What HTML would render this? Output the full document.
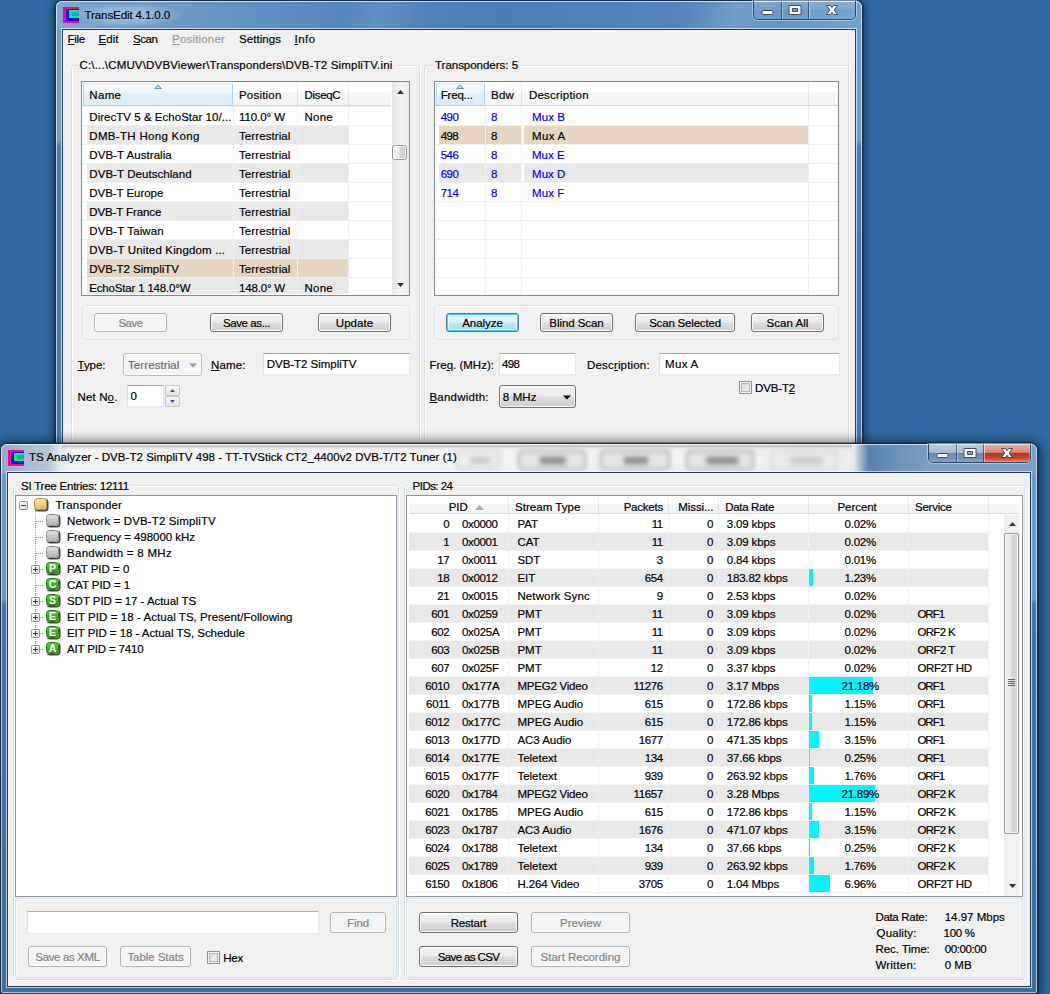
<!DOCTYPE html><html><head><meta charset="utf-8"><title>TransEdit</title><style>
*{box-sizing:border-box}
html,body{margin:0;padding:0}
body{width:1050px;height:994px;position:relative;overflow:hidden;background:#2f6ba4;font-family:"Liberation Sans",sans-serif;font-size:11.5px;color:#000}
div,span.t{position:absolute}
.t{line-height:14px;white-space:pre}
.t,.btn{-webkit-text-stroke:0.18px currentColor}
.dis{color:#838383}
.blue{color:#0000ff}
.win{border:1px solid #1b2c44;border-radius:7px 7px 3px 3px;box-shadow:0 0 0 1px rgba(10,30,60,.3),0 1px 8px 2px rgba(0,0,0,.45)}
.win.act{box-shadow:0 0 0 1px rgba(10,30,60,.3),0 1px 11px 3px rgba(0,0,0,.55)}
.win>.hl{left:0;top:0;right:0;bottom:0;border:1px solid rgba(255,255,255,.62);border-radius:6px 6px 2px 2px}
.client{background:#f0f0f0;box-shadow:0 0 0 1px #2b3c55,0 0 0 2px rgba(255,255,255,.62)}
.gb{border:1px solid #d5dfe5;border-radius:3px;box-shadow:inset 1px 1px 0 #fff,1px 1px 0 #fff}
.gl{background:#f0f0f0}
.lv{background:#fff;border:1px solid #828790}
.hdr{background:linear-gradient(#fff 0,#fff 45%,#f5f6f8 46%,#f3f4f6 100%);border-bottom:1px solid #d5d5d5}
.hsep{width:1px;background:linear-gradient(#f2f2f2,#dcdde3)}
.hsel{background:linear-gradient(#f3f9fd 0,#eff7fc 42%,#e1eff8 43%,#dcecf6 100%);border:1px solid #a6d6f0;border-top-color:#d8ecf8}
.hsel2{background:linear-gradient(#f2f9fe 0,#e6f4fd 45%,#d9effc 46%,#cfe8f8 100%);border:1px solid #a9cfe6;border-top-color:#c6e2f4}
.btn{border:1px solid #707070;border-radius:3px;background:linear-gradient(#f2f2f2 0,#ebebeb 48%,#dddddd 52%,#cfcfcf 100%);box-shadow:inset 0 0 0 1px rgba(255,255,255,.85);text-align:center;line-height:17px;white-space:pre;padding-top:1px}
.btn.d{border-color:#adb2b5;background:#f4f4f4;color:#838383;box-shadow:inset 0 0 0 1px #fcfcfc}
.btn.def{border-color:#3c7fb1;background:linear-gradient(#eaf6fd 0,#d9f0fc 48%,#bee6fd 52%,#a7d9f5 100%);box-shadow:inset 0 0 0 1px #46d0f5,inset 0 0 0 2px rgba(255,255,255,.6)}
.inp{background:#fff;border:1px solid #e3e9ef;border-top-color:#abadb3;border-left-color:#dbdfe6;border-radius:1px}
.pnl{border:1px solid #d9e3ea;border-radius:4px;box-shadow:inset 1px 1px 0 #fafafa}
.chk{border:1px solid #8e8f8f;background:linear-gradient(135deg,#d6d6d6,#f4f4f4);box-shadow:inset 0 0 0 1px #f4f4f4,inset 0 0 0 2px #b5b5b5}
.row{height:19px}
.ti{width:13px;height:12px;border-radius:3.5px;box-shadow:1px 1px 0 0.5px #444;color:#fff;font-weight:bold;font-size:10.5px;line-height:11px;text-align:center}
.ti.gy{background:linear-gradient(#dedede,#b4b4b4);border:1px solid #8a8a8a}
.ti.go{background:linear-gradient(#ffe6a8,#efb85a);border:1px solid #b98a3c}
.ti.gr{background:linear-gradient(#5fd03c,#1f9a10);border:1px solid #1d7a12}
.exp{width:9px;height:9px;border:1px solid #919191;border-radius:1.5px;background:linear-gradient(135deg,#fff,#d8d8d8)}
.exp i{position:absolute;left:1px;top:3px;width:5px;height:1px;background:#30409a}
.exp b{position:absolute;left:3px;top:1px;width:1px;height:5px;background:#30409a}
.dotv{width:1px;background:repeating-linear-gradient(#a0a0a0 0 1px,transparent 1px 2px)}
.doth{height:1px;background:repeating-linear-gradient(90deg,#a0a0a0 0 1px,transparent 1px 2px)}
</style></head><body>
<div class="win" style="left:55px;top:0;width:808px;height:470px;background:linear-gradient(#6f9dca 0,#6f9dca 139px,#4b7db4 146px,#4478b0 100%)"><div style="left:0;top:0;width:806px;height:29px;border-radius:6px 6px 0 0;background:linear-gradient(105deg,rgba(255,255,255,0) 0,rgba(255,255,255,0) 36%,rgba(255,255,255,.10) 40%,rgba(255,255,255,0) 46%,rgba(255,255,255,0) 78%,rgba(255,255,255,.13) 84%,rgba(255,255,255,0) 89%),linear-gradient(90deg,#7ea8d0 0,#6f9cc8 12%,#5186bb 38%,#4a7fb6 55%,#5084ba 75%,#6797c6 92%,#74a2cd 100%)"></div><div class="hl"></div></div>
<div class="" style="left:78px;top:4px;width:102px;height:22px;background:radial-gradient(ellipse at center,rgba(255,255,255,.38) 0,rgba(255,255,255,.18) 50%,rgba(255,255,255,0) 75%);border-radius:10px"></div>
<div class="" style="left:63px;top:7px;width:16px;height:16px;background:#ff0090"><div style="left:3px;top:2px;width:13px;height:12px;background:#2000ff"></div><div style="left:6px;top:3px;width:10px;height:8px;background:#00ff40"></div><div style="left:9px;top:5px;width:7px;height:4px;background:#10a0f0"></div></div>
<span class="t " style="left:84.6px;top:8.02px;letter-spacing:-0.10px;">TransEdit 4.1.0.0</span>
<div class="" style="left:753px;top:1px;width:103px;height:19px;border:1px solid rgba(25,45,75,.78);border-top:none;border-radius:0 0 5px 5px;box-shadow:0 0 0 1px rgba(255,255,255,.42)"><div style="left:0;top:0;width:101px;height:18px;background:linear-gradient(rgba(255,255,255,.16) 0,rgba(255,255,255,.10) 45%,rgba(255,255,255,.02) 50%,rgba(255,255,255,.07) 100%);border-radius:0 0 4px 4px"></div><div style="left:27px;top:0;width:1px;height:18px;background:rgba(20,40,70,.62)"></div><div style="left:28px;top:0;width:1px;height:18px;background:rgba(255,255,255,.38)"></div><div style="left:54px;top:0;width:1px;height:18px;background:rgba(20,40,70,.62)"></div><div style="left:55px;top:0;width:1px;height:18px;background:rgba(255,255,255,.38)"></div><div style="left:0;top:0;width:101px;height:1px;background:rgba(255,255,255,.45)"></div></div>
<svg style="position:absolute;left:753px;top:1px" width="103" height="19" viewBox="0 0 103 19"><rect x="9.0" y="9.5" width="11" height="4" rx="1" fill="#fff" stroke="#414a5e" stroke-width="1"/><path fill-rule="evenodd" d="M36.0 4.5h12v9h-12z M39.5 7.5v3h5v-3z" fill="#fff" stroke="#414a5e" stroke-width="1" stroke-linejoin="round"/><path d="M-5.5 -4.5 L-1.6 -4.5 L0 -2.3 L1.6 -4.5 L5.5 -4.5 L2.2 0 L5.5 4.5 L1.6 4.5 L0 2.3 L-1.6 4.5 L-5.5 4.5 L-2.2 0 Z" transform="translate(79.0 9)" fill="#fff" stroke="#414a5e" stroke-width="1" stroke-linejoin="round"/></svg>
<div class="client" style="left:63px;top:30px;width:792px;height:440px;"></div>
<span class="t " style="left:67.5px;top:31.82px;letter-spacing:-0.26px;"><u>F</u>ile</span>
<span class="t " style="left:98.5px;top:31.82px;letter-spacing:0.04px;"><u>E</u>dit</span>
<span class="t " style="left:133px;top:31.82px;letter-spacing:-0.43px;"><u>S</u>can</span>
<span class="t dis" style="left:172px;top:31.82px;letter-spacing:0.19px;color:#9a9a9a"><u>P</u>ositioner</span>
<span class="t " style="left:239px;top:31.82px;letter-spacing:0.05px;">Settin<u>g</u>s</span>
<span class="t " style="left:294.5px;top:31.82px;letter-spacing:0.45px;"><u>I</u>nfo</span>
<div class="gb" style="left:71px;top:65px;width:349px;height:405px;"></div>
<div class="gb" style="left:424px;top:65px;width:425px;height:405px;"></div>
<div class="gl" style="left:77px;top:58px;width:319px;height:16px;"></div>
<span class="t " style="left:79.5px;top:58.02px;letter-spacing:0.17px;">C:\...\CMUV\DVBViewer\Transponders\DVB-T2 SimpliTV.ini</span>
<div class="gl" style="left:432px;top:58px;width:89px;height:16px;"></div>
<span class="t " style="left:435px;top:58.02px;letter-spacing:-0.02px;">Transponders: 5</span>
<div class="lv" style="left:81px;top:81px;width:329px;height:215px;"></div>
<div class="" style="left:87px;top:126px;width:261px;height:19px;background:#e8e8e8"></div>
<div class="" style="left:87px;top:164px;width:261px;height:19px;background:#e8e8e8"></div>
<div class="" style="left:87px;top:202px;width:261px;height:19px;background:#e8e8e8"></div>
<div class="" style="left:87px;top:240px;width:261px;height:19px;background:#e8e8e8"></div>
<div class="" style="left:87px;top:259px;width:261px;height:19px;background:#e6d5c1"></div>
<div class="" style="left:87px;top:278px;width:261px;height:16px;background:#e8e8e8"></div>
<div class="" style="left:82px;top:106px;width:309px;height:1px;background:#f0f0f0"></div>
<div class="" style="left:82px;top:125px;width:309px;height:1px;background:#f0f0f0"></div>
<div class="" style="left:82px;top:144px;width:309px;height:1px;background:#f0f0f0"></div>
<div class="" style="left:82px;top:163px;width:309px;height:1px;background:#f0f0f0"></div>
<div class="" style="left:82px;top:182px;width:309px;height:1px;background:#f0f0f0"></div>
<div class="" style="left:82px;top:201px;width:309px;height:1px;background:#f0f0f0"></div>
<div class="" style="left:82px;top:220px;width:309px;height:1px;background:#f0f0f0"></div>
<div class="" style="left:82px;top:239px;width:309px;height:1px;background:#f0f0f0"></div>
<div class="" style="left:82px;top:258px;width:309px;height:1px;background:#f0f0f0"></div>
<div class="" style="left:82px;top:277px;width:309px;height:1px;background:#f0f0f0"></div>
<div class="" style="left:233px;top:106px;width:1px;height:188px;background:#f0f0f0"></div>
<div class="" style="left:297px;top:106px;width:1px;height:188px;background:#f0f0f0"></div>
<div class="" style="left:348px;top:106px;width:1px;height:188px;background:#f0f0f0"></div>
<div style="left:82px;top:82px;width:309px;height:212px;overflow:hidden">
<span class="t" style="left:7.299999999999997px;top:27.62px;letter-spacing:0.03px;">DirecTV 5 &amp; EchoStar 10/...</span>
<span class="t" style="left:157px;top:27.62px;letter-spacing:-0.07px;">110.0° W</span>
<span class="t" style="left:222.39999999999998px;top:27.62px;letter-spacing:0.28px;">None</span>
<span class="t" style="left:7.299999999999997px;top:46.62px;letter-spacing:0.31px;">DMB-TH Hong Kong</span>
<span class="t" style="left:157px;top:46.62px;letter-spacing:0.09px;">Terrestrial</span>
<span class="t" style="left:7.299999999999997px;top:65.62px;letter-spacing:0.06px;">DVB-T Australia</span>
<span class="t" style="left:157px;top:65.62px;letter-spacing:0.09px;">Terrestrial</span>
<span class="t" style="left:7.299999999999997px;top:84.62px;letter-spacing:0.06px;">DVB-T Deutschland</span>
<span class="t" style="left:157px;top:84.62px;letter-spacing:0.09px;">Terrestrial</span>
<span class="t" style="left:7.299999999999997px;top:103.62px;letter-spacing:-0.05px;">DVB-T Europe</span>
<span class="t" style="left:157px;top:103.62px;letter-spacing:0.09px;">Terrestrial</span>
<span class="t" style="left:7.299999999999997px;top:122.62px;letter-spacing:-0.11px;">DVB-T France</span>
<span class="t" style="left:157px;top:122.62px;letter-spacing:0.09px;">Terrestrial</span>
<span class="t" style="left:7.299999999999997px;top:141.62px;letter-spacing:0.12px;">DVB-T Taiwan</span>
<span class="t" style="left:157px;top:141.62px;letter-spacing:0.09px;">Terrestrial</span>
<span class="t" style="left:7.299999999999997px;top:160.62px;letter-spacing:0.16px;">DVB-T United Kingdom ...</span>
<span class="t" style="left:157px;top:160.62px;letter-spacing:0.09px;">Terrestrial</span>
<span class="t" style="left:7.299999999999997px;top:179.62px;letter-spacing:-0.04px;">DVB-T2 SimpliTV</span>
<span class="t" style="left:157px;top:179.62px;letter-spacing:0.09px;">Terrestrial</span>
<span class="t" style="left:7.299999999999997px;top:198.62px;letter-spacing:-0.18px;">EchoStar 1 148.0°W</span>
<span class="t" style="left:157px;top:198.62px;letter-spacing:-0.18px;">148.0° W</span>
<span class="t" style="left:222.39999999999998px;top:198.62px;letter-spacing:0.28px;">None</span>
</div>
<div class="hdr" style="left:82px;top:82px;width:309px;height:24px;"></div>
<div class="hsel" style="left:83px;top:83px;width:150px;height:23px;"></div>
<div class="hsep" style="left:297px;top:82px;width:1px;height:23px;"></div>
<div class="hsep" style="left:348px;top:82px;width:1px;height:23px;"></div>
<span class="t " style="left:89.3px;top:88.02px;letter-spacing:0.33px;">Name</span>
<span class="t " style="left:239px;top:88.02px;letter-spacing:0.20px;">Position</span>
<span class="t " style="left:304.4px;top:88.02px;letter-spacing:-0.29px;">DiseqC</span>
<svg style="position:absolute;left:154px;top:84px" width="8" height="5"><path d="M0.5 4.5L4 1L7.5 4.5Z" fill="#b9d7ee" stroke="#5f8fb5" stroke-width="0.9"/></svg>
<div class="" style="left:392px;top:82px;width:17px;height:213px;background:linear-gradient(90deg,#e4e4e4,#efefef 30%,#f2f2f2 60%,#ececec)"></div>
<svg style="position:absolute;left:397px;top:90px" width="7" height="4"><path d="M0 4L3.5 0L7 4Z" fill="#333"/></svg>
<svg style="position:absolute;left:397px;top:283px" width="7" height="4"><path d="M0 0L3.5 4L7 0Z" fill="#333"/></svg>
<div class="" style="left:392px;top:145px;width:15px;height:15px;border:1px solid #979797;border-radius:2.5px;background:linear-gradient(90deg,#f5f5f5,#e9e9e9 48%,#d5d5d5 52%,#d0d0d0);box-shadow:inset 0 0 0 1px rgba(255,255,255,.7)"></div>
<div class="pnl" style="left:82px;top:305px;width:328px;height:35px;"></div>
<div class="btn d" style="left:94px;top:313px;width:73px;height:19px;"><span style="letter-spacing:-0.50px;">Save</span></div>
<div class="btn" style="left:210px;top:313px;width:73px;height:19px;"><span style="letter-spacing:-0.41px;">Save as...</span></div>
<div class="btn" style="left:318px;top:313px;width:73px;height:19px;"><span style="letter-spacing:0.03px;">Update</span></div>
<span class="t " style="left:77.5px;top:357.62px;letter-spacing:-0.03px;"><u>T</u>ype:</span>
<div class="" style="left:123px;top:353px;width:79px;height:23px;border:1px solid #b8bcc0;border-radius:3px;background:#f3f3f3;box-shadow:inset 0 0 0 1px #fbfbfb"></div>
<span class="t dis" style="left:128px;top:357.62px;letter-spacing:0.09px;color:#6d6d6d">Terrestrial</span>
<svg style="position:absolute;left:189px;top:363px" width="8" height="5"><path d="M0 0.5L4 4.5L8 0.5Z" fill="#9a9a9a"/></svg>
<span class="t " style="left:211px;top:357.62px;letter-spacing:0.12px;"><u>N</u>ame:</span>
<div class="inp" style="left:263px;top:353px;width:147px;height:22px;"></div>
<span class="t " style="left:266.8px;top:356.82px;letter-spacing:-0.04px;">DVB-T2 SimpliTV</span>
<span class="t " style="left:77.5px;top:390.02px;letter-spacing:0.14px;">Net N<u>o</u>.</span>
<div class="inp" style="left:127px;top:385px;width:37px;height:22px;"></div>
<span class="t " style="left:130.5px;top:388.52px;letter-spacing:-0.38px;">0</span>
<div class="" style="left:165px;top:385px;width:15px;height:11px;border:1px solid #c4c8cc;border-radius:2px;background:linear-gradient(#f8f8f8,#e4e4e4)"></div>
<div class="" style="left:165px;top:396px;width:15px;height:11px;border:1px solid #c4c8cc;border-radius:2px;background:linear-gradient(#f8f8f8,#e4e4e4)"></div>
<svg style="position:absolute;left:170px;top:389px" width="5" height="3"><path d="M0 3L2.5 0L5 3Z" fill="#3a50a0"/></svg>
<svg style="position:absolute;left:170px;top:400px" width="5" height="3"><path d="M0 0L2.5 3L5 0Z" fill="#3a50a0"/></svg>
<div class="lv" style="left:434px;top:81px;width:405px;height:215px;"></div>
<div class="" style="left:439px;top:126px;width:46px;height:18px;background:#e6d5c1"></div>
<div class="" style="left:486px;top:126px;width:35px;height:18px;background:#e6d5c1"></div>
<div class="" style="left:524px;top:126px;width:284px;height:18px;background:#e6d5c1"></div>
<div class="" style="left:439px;top:164px;width:46px;height:18px;background:#e8e8e8"></div>
<div class="" style="left:486px;top:164px;width:35px;height:18px;background:#e8e8e8"></div>
<div class="" style="left:524px;top:164px;width:284px;height:18px;background:#e8e8e8"></div>
<div class="" style="left:435px;top:125px;width:403px;height:1px;background:#f0f0f0"></div>
<div class="" style="left:435px;top:144px;width:403px;height:1px;background:#f0f0f0"></div>
<div class="" style="left:435px;top:163px;width:403px;height:1px;background:#f0f0f0"></div>
<div class="" style="left:435px;top:182px;width:403px;height:1px;background:#f0f0f0"></div>
<div class="" style="left:435px;top:201px;width:403px;height:1px;background:#f0f0f0"></div>
<div class="" style="left:435px;top:220px;width:403px;height:1px;background:#f0f0f0"></div>
<div class="" style="left:435px;top:239px;width:403px;height:1px;background:#f0f0f0"></div>
<div class="" style="left:435px;top:258px;width:403px;height:1px;background:#f0f0f0"></div>
<div class="" style="left:435px;top:277px;width:403px;height:1px;background:#f0f0f0"></div>
<div class="" style="left:485px;top:106px;width:1px;height:188px;background:#f0f0f0"></div>
<div class="" style="left:521px;top:106px;width:1px;height:188px;background:#f0f0f0"></div>
<div class="" style="left:808px;top:106px;width:1px;height:188px;background:#f0f0f0"></div>
<span class="t blue" style="left:440.7px;top:109.62px;letter-spacing:-0.50px;">490</span>
<span class="t blue" style="left:491px;top:109.62px;letter-spacing:-0.38px;">8</span>
<span class="t blue" style="left:532px;top:109.62px;letter-spacing:0.08px;">Mux B</span>
<span class="t " style="left:440.7px;top:128.62px;letter-spacing:-0.66px;">498</span>
<span class="t " style="left:491px;top:128.62px;letter-spacing:-0.38px;">8</span>
<span class="t " style="left:532px;top:128.62px;letter-spacing:0.33px;">Mux A</span>
<span class="t blue" style="left:440.7px;top:147.62px;letter-spacing:-0.50px;">546</span>
<span class="t blue" style="left:491px;top:147.62px;letter-spacing:-0.38px;">8</span>
<span class="t blue" style="left:532px;top:147.62px;">Mux E</span>
<span class="t blue" style="left:440.7px;top:166.62px;letter-spacing:-0.50px;">690</span>
<span class="t blue" style="left:491px;top:166.62px;letter-spacing:-0.38px;">8</span>
<span class="t blue" style="left:532px;top:166.62px;letter-spacing:0.05px;">Mux D</span>
<span class="t blue" style="left:440.7px;top:185.62px;letter-spacing:-0.50px;">714</span>
<span class="t blue" style="left:491px;top:185.62px;letter-spacing:-0.38px;">8</span>
<span class="t blue" style="left:532px;top:185.62px;letter-spacing:0.11px;">Mux F</span>
<div class="hdr" style="left:435px;top:82px;width:403px;height:24px;"></div>
<div class="hsel" style="left:436px;top:83px;width:49px;height:23px;"></div>
<div class="hsep" style="left:521px;top:82px;width:1px;height:23px;"></div>
<div class="hsep" style="left:808px;top:82px;width:1px;height:23px;"></div>
<span class="t " style="left:440.7px;top:88.02px;letter-spacing:-0.18px;">Freq...</span>
<span class="t " style="left:491px;top:88.02px;letter-spacing:0.21px;">Bdw</span>
<span class="t " style="left:529px;top:88.02px;letter-spacing:0.20px;">Description</span>
<svg style="position:absolute;left:456px;top:84px" width="8" height="5"><path d="M0.5 4.5L4 1L7.5 4.5Z" fill="#b9d7ee" stroke="#5f8fb5" stroke-width="0.9"/></svg>
<div class="pnl" style="left:434px;top:305px;width:405px;height:35px;"></div>
<div class="btn def" style="left:446px;top:313px;width:73px;height:19px;"><span style="letter-spacing:-0.03px;">Analyze</span></div>
<div class="btn" style="left:540px;top:313px;width:73px;height:19px;"><span style="letter-spacing:-0.06px;">Blind Scan</span></div>
<div class="btn" style="left:635px;top:313px;width:100px;height:19px;"><span style="letter-spacing:-0.19px;">Scan Selected</span></div>
<div class="btn" style="left:751px;top:313px;width:73px;height:19px;"><span style="letter-spacing:0.05px;">Scan All</span></div>
<span class="t " style="left:429.4px;top:357.52px;">Fre<u>q</u>. (MHz):</span>
<div class="inp" style="left:499px;top:353px;width:77px;height:22px;"></div>
<span class="t " style="left:502px;top:356.82px;letter-spacing:-0.66px;">498</span>
<span class="t " style="left:587px;top:357.52px;letter-spacing:0.17px;">Desc<u>r</u>iption:</span>
<div class="inp" style="left:659px;top:353px;width:181px;height:22px;"></div>
<span class="t " style="left:665px;top:356.82px;letter-spacing:0.33px;">Mux A</span>
<span class="t " style="left:429.4px;top:390.32px;letter-spacing:0.24px;"><u>B</u>andwidth:</span>
<div class="btn" style="left:499px;top:385px;width:77px;height:23px;border-radius:3px"></div>
<span class="t " style="left:502.8px;top:390.02px;letter-spacing:0.13px;">8 MHz</span>
<svg style="position:absolute;left:563px;top:395px" width="8" height="5"><path d="M0 0.5L4 4.5L8 0.5Z" fill="#000"/></svg>
<div class="chk" style="left:739px;top:381px;width:13px;height:13px;"></div>
<span class="t " style="left:755px;top:381.02px;letter-spacing:-0.15px;">DVB-T<u>2</u></span>
<div class="win act" style="left:0px;top:443px;width:1038px;height:551px;background:linear-gradient(#6c9ac8 0,#6c9ac8 154px,#4775ab 161px,#3f6e9f 100%)"><div style="left:0;top:0;width:1036px;height:30px;border-radius:6px 6px 0 0;background:linear-gradient(90deg,#8ea9c7 0.00%,#a6bad1 1.93%,#b6c6d9 4.63%,#dde4ec 5.60%,#f2f2f2 6.56%,#f3f3f3 28.96%,#f0f0f0 67.57%,#eeeeee 81.85%,#e2e6eb 82.34%,#9fb6d0 83.01%,#5a86b5 83.69%,#5783b3 84.17%,#6d93bd 86.87%,#7b9cc3 89.29%,#7c9dc4 100.00%)"></div><div class="hl"></div></div>
<div class="" style="left:456px;top:450px;width:44px;height:20px;border:2px solid rgba(95,95,95,0.18);background:rgba(170,170,170,0.06);filter:blur(2.2px);border-radius:4px"></div>
<div class="" style="left:518px;top:450px;width:68px;height:20px;border:2px solid rgba(95,95,95,0.42);background:rgba(170,170,170,0.15);filter:blur(2.2px);border-radius:4px"></div>
<div class="" style="left:600px;top:450px;width:70px;height:20px;border:2px solid rgba(95,95,95,0.42);background:rgba(170,170,170,0.15);filter:blur(2.2px);border-radius:4px"></div>
<div class="" style="left:686px;top:450px;width:68px;height:20px;border:2px solid rgba(95,95,95,0.42);background:rgba(170,170,170,0.15);filter:blur(2.2px);border-radius:4px"></div>
<div class="" style="left:770px;top:450px;width:68px;height:20px;border:2px solid rgba(95,95,95,0.16);background:rgba(170,170,170,0.06);filter:blur(2.2px);border-radius:4px"></div>
<div class="" style="left:470px;top:457px;width:20px;height:7px;background:rgba(40,40,40,0.18);filter:blur(2.5px)"></div>
<div class="" style="left:540px;top:457px;width:26px;height:7px;background:rgba(40,40,40,0.5);filter:blur(2.5px)"></div>
<div class="" style="left:624px;top:457px;width:24px;height:7px;background:rgba(40,40,40,0.5);filter:blur(2.5px)"></div>
<div class="" style="left:706px;top:457px;width:32px;height:7px;background:rgba(40,40,40,0.5);filter:blur(2.5px)"></div>
<div class="" style="left:790px;top:457px;width:32px;height:7px;background:rgba(40,40,40,0.16);filter:blur(2.5px)"></div>
<div class="" style="left:62px;top:445px;width:790px;height:7px;background:linear-gradient(rgba(110,110,110,.38),rgba(200,200,200,.12) 55%,rgba(255,255,255,0))"></div>
<div class="" style="left:8px;top:450px;width:16px;height:16px;background:#ff0090"><div style="left:3px;top:2px;width:13px;height:12px;background:#2000ff"></div><div style="left:6px;top:3px;width:10px;height:8px;background:#00ff40"></div><div style="left:9px;top:5px;width:7px;height:4px;background:#10a0f0"></div></div>
<span class="t " style="left:29px;top:450.42px;letter-spacing:0.04px;">TS Analyzer - DVB-T2 SimpliTV 498 - TT-TVStick CT2_4400v2 DVB-T/T2 Tuner (1)</span>
<div class="" style="left:928px;top:444px;width:103px;height:19px;border:1px solid rgba(25,45,75,.78);border-top:none;border-radius:0 0 5px 5px;box-shadow:0 0 0 1px rgba(255,255,255,.42)"><div style="left:0;top:0;width:101px;height:18px;background:linear-gradient(#bdcbdb 0,#a9bbd0 47%,#6b8aae 50%,#7493b7 80%,#86a4c5 100%);border-radius:0 0 4px 4px"></div><div style="left:55px;top:0;width:46px;height:18px;border-radius:0 0 4px 0;background:linear-gradient(#e8b3a9 0,#d68479 47%,#b9301a 50%,#c5452b 75%,#d9805c 100%);box-shadow:inset 0 0 0 1px rgba(255,255,255,.25)"></div><div style="left:27px;top:0;width:1px;height:18px;background:rgba(20,40,70,.62)"></div><div style="left:28px;top:0;width:1px;height:18px;background:rgba(255,255,255,.38)"></div><div style="left:54px;top:0;width:1px;height:18px;background:rgba(20,40,70,.62)"></div><div style="left:55px;top:0;width:1px;height:18px;background:rgba(255,255,255,.38)"></div><div style="left:0;top:0;width:101px;height:1px;background:rgba(255,255,255,.45)"></div></div>
<svg style="position:absolute;left:928px;top:444px" width="103" height="19" viewBox="0 0 103 19"><rect x="9.0" y="9.5" width="11" height="4" rx="1" fill="#fff" stroke="#414a5e" stroke-width="1"/><path fill-rule="evenodd" d="M36.0 4.5h12v9h-12z M39.5 7.5v3h5v-3z" fill="#fff" stroke="#414a5e" stroke-width="1" stroke-linejoin="round"/><path d="M-5.5 -4.5 L-1.6 -4.5 L0 -2.3 L1.6 -4.5 L5.5 -4.5 L2.2 0 L5.5 4.5 L1.6 4.5 L0 2.3 L-1.6 4.5 L-5.5 4.5 L-2.2 0 Z" transform="translate(79.0 9)" fill="#fff" stroke="#414a5e" stroke-width="1" stroke-linejoin="round"/></svg>
<div class="client" style="left:8px;top:473px;width:1022px;height:513px;"></div>
<div class="gb" style="left:13px;top:485px;width:386px;height:495px;"></div>
<div class="gb" style="left:404px;top:485px;width:621px;height:495px;"></div>
<div class="gl" style="left:19px;top:478px;width:112px;height:15px;"></div>
<span class="t " style="left:21px;top:478.72px;letter-spacing:-0.22px;">SI Tree Entries: 12111</span>
<div class="gl" style="left:410px;top:478px;width:45px;height:15px;"></div>
<span class="t " style="left:412.6px;top:479.02px;letter-spacing:-0.54px;">PIDs: 24</span>
<div class="lv" style="left:15px;top:495px;width:382px;height:402px;border-color:#8e9299"></div>
<div class="dotv" style="left:35px;top:511px;width:1px;height:139px;"></div>
<div class="exp" style="left:19px;top:501px;width:9px;height:9px;"><i></i></div>
<div class="ti go" style="left:34px;top:498px;width:13px;height:12px;"></div>
<span class="t " style="left:55.6px;top:497.62px;letter-spacing:0.15px;">Transponder</span>
<div class="doth" style="left:36px;top:521px;width:7px;height:1px;"></div>
<div class="ti gy" style="left:46px;top:514px;width:13px;height:12px;"></div>
<span class="t " style="left:67px;top:513.62px;letter-spacing:0.14px;">Network = DVB-T2 SimpliTV</span>
<div class="doth" style="left:36px;top:537px;width:7px;height:1px;"></div>
<div class="ti gy" style="left:46px;top:530px;width:13px;height:12px;"></div>
<span class="t " style="left:67px;top:529.62px;letter-spacing:-0.04px;">Frequency = 498000 kHz</span>
<div class="doth" style="left:36px;top:553px;width:7px;height:1px;"></div>
<div class="ti gy" style="left:46px;top:546px;width:13px;height:12px;"></div>
<span class="t " style="left:67px;top:545.62px;letter-spacing:0.29px;">Bandwidth = 8 MHz</span>
<div class="doth" style="left:36px;top:569px;width:7px;height:1px;"></div>
<div class="exp" style="left:31px;top:565px;width:9px;height:9px;"><i></i><b></b></div>
<div class="ti gr" style="left:46px;top:562px;width:13px;height:12px;">P</div>
<span class="t " style="left:67px;top:561.62px;">PAT PID = 0</span>
<div class="doth" style="left:36px;top:585px;width:7px;height:1px;"></div>
<div class="ti gr" style="left:46px;top:578px;width:13px;height:12px;">C</div>
<span class="t " style="left:67px;top:577.62px;letter-spacing:-0.07px;">CAT PID = 1</span>
<div class="doth" style="left:36px;top:601px;width:7px;height:1px;"></div>
<div class="exp" style="left:31px;top:597px;width:9px;height:9px;"><i></i><b></b></div>
<div class="ti gr" style="left:46px;top:594px;width:13px;height:12px;">S</div>
<span class="t " style="left:67px;top:593.62px;letter-spacing:-0.05px;">SDT PID = 17 - Actual TS</span>
<div class="doth" style="left:36px;top:617px;width:7px;height:1px;"></div>
<div class="exp" style="left:31px;top:613px;width:9px;height:9px;"><i></i><b></b></div>
<div class="ti gr" style="left:46px;top:610px;width:13px;height:12px;">E</div>
<span class="t " style="left:67px;top:609.62px;letter-spacing:0.06px;">EIT PID = 18 - Actual TS, Present/Following</span>
<div class="doth" style="left:36px;top:633px;width:7px;height:1px;"></div>
<div class="exp" style="left:31px;top:629px;width:9px;height:9px;"><i></i><b></b></div>
<div class="ti gr" style="left:46px;top:626px;width:13px;height:12px;">E</div>
<span class="t " style="left:67px;top:625.62px;letter-spacing:-0.05px;">EIT PID = 18 - Actual TS, Schedule</span>
<div class="doth" style="left:36px;top:649px;width:7px;height:1px;"></div>
<div class="exp" style="left:31px;top:645px;width:9px;height:9px;"><i></i><b></b></div>
<div class="ti gr" style="left:46px;top:642px;width:13px;height:12px;">A</div>
<span class="t " style="left:67px;top:641.62px;letter-spacing:-0.16px;">AIT PID = 7410</span>
<div class="pnl" style="left:15px;top:898px;width:382px;height:80px;border-color:#d9e3ea"></div>
<div class="inp" style="left:27px;top:911px;width:292px;height:23px;"></div>
<div class="btn d" style="left:330px;top:912px;width:56px;height:21px;line-height:19px"><span style="letter-spacing:-0.12px;">Find</span></div>
<div class="btn d" style="left:28px;top:946px;width:79px;height:21px;line-height:19px"><span style="letter-spacing:-0.37px;">Save as XML</span></div>
<div class="btn d" style="left:120px;top:946px;width:71px;height:21px;line-height:19px"><span style="letter-spacing:-0.06px;">Table Stats</span></div>
<div class="chk" style="left:207px;top:951px;width:13px;height:13px;"></div>
<span class="t " style="left:223.2px;top:951.02px;letter-spacing:-0.25px;">Hex</span>
<div class="lv" style="left:406px;top:495px;width:617px;height:402px;border-color:#8e9299"></div>
<div class="" style="left:409px;top:533px;width:579px;height:17px;background:#e8e8e8"></div>
<div class="" style="left:409px;top:569px;width:579px;height:17px;background:#e8e8e8"></div>
<div class="" style="left:809px;top:569px;width:4px;height:17px;background:#00f6ff"></div>
<div class="" style="left:409px;top:605px;width:579px;height:17px;background:#e8e8e8"></div>
<div class="" style="left:409px;top:641px;width:579px;height:17px;background:#e8e8e8"></div>
<div class="" style="left:409px;top:677px;width:579px;height:17px;background:#e8e8e8"></div>
<div class="" style="left:809px;top:677px;width:64px;height:17px;background:#00f6ff"></div>
<div class="" style="left:809px;top:695px;width:3px;height:17px;background:#00f6ff"></div>
<div class="" style="left:409px;top:713px;width:579px;height:17px;background:#e8e8e8"></div>
<div class="" style="left:809px;top:713px;width:3px;height:17px;background:#00f6ff"></div>
<div class="" style="left:809px;top:731px;width:10px;height:17px;background:#00f6ff"></div>
<div class="" style="left:409px;top:749px;width:579px;height:17px;background:#e8e8e8"></div>
<div class="" style="left:809px;top:749px;width:1px;height:17px;background:#00f6ff"></div>
<div class="" style="left:809px;top:767px;width:5px;height:17px;background:#00f6ff"></div>
<div class="" style="left:409px;top:785px;width:579px;height:17px;background:#e8e8e8"></div>
<div class="" style="left:809px;top:785px;width:66px;height:17px;background:#00f6ff"></div>
<div class="" style="left:809px;top:803px;width:3px;height:17px;background:#00f6ff"></div>
<div class="" style="left:409px;top:821px;width:579px;height:17px;background:#e8e8e8"></div>
<div class="" style="left:809px;top:821px;width:10px;height:17px;background:#00f6ff"></div>
<div class="" style="left:809px;top:839px;width:1px;height:17px;background:#00f6ff"></div>
<div class="" style="left:409px;top:857px;width:579px;height:17px;background:#e8e8e8"></div>
<div class="" style="left:809px;top:857px;width:5px;height:17px;background:#00f6ff"></div>
<div class="" style="left:809px;top:875px;width:21px;height:17px;background:#00f6ff"></div>
<div class="" style="left:508px;top:514px;width:1px;height:381px;background:repeating-linear-gradient(#fff 0 1px,#e4e4e4 1px 2px)"></div>
<div class="" style="left:598px;top:514px;width:1px;height:381px;background:repeating-linear-gradient(#fff 0 1px,#e4e4e4 1px 2px)"></div>
<div class="" style="left:668px;top:514px;width:1px;height:381px;background:repeating-linear-gradient(#fff 0 1px,#e4e4e4 1px 2px)"></div>
<div class="" style="left:718px;top:514px;width:1px;height:381px;background:repeating-linear-gradient(#fff 0 1px,#e4e4e4 1px 2px)"></div>
<div class="" style="left:808px;top:514px;width:1px;height:381px;background:repeating-linear-gradient(#fff 0 1px,#e4e4e4 1px 2px)"></div>
<div class="" style="left:908px;top:514px;width:1px;height:381px;background:repeating-linear-gradient(#fff 0 1px,#e4e4e4 1px 2px)"></div>
<div class="" style="left:988px;top:514px;width:1px;height:381px;background:repeating-linear-gradient(#fff 0 1px,#e4e4e4 1px 2px)"></div>
<div class="" style="left:408px;top:532px;width:581px;height:1px;background:repeating-linear-gradient(90deg,#fff 0 1px,#e9e9e9 1px 2px)"></div>
<div class="" style="left:408px;top:550px;width:581px;height:1px;background:repeating-linear-gradient(90deg,#fff 0 1px,#e9e9e9 1px 2px)"></div>
<div class="" style="left:408px;top:568px;width:581px;height:1px;background:repeating-linear-gradient(90deg,#fff 0 1px,#e9e9e9 1px 2px)"></div>
<div class="" style="left:408px;top:586px;width:581px;height:1px;background:repeating-linear-gradient(90deg,#fff 0 1px,#e9e9e9 1px 2px)"></div>
<div class="" style="left:408px;top:604px;width:581px;height:1px;background:repeating-linear-gradient(90deg,#fff 0 1px,#e9e9e9 1px 2px)"></div>
<div class="" style="left:408px;top:622px;width:581px;height:1px;background:repeating-linear-gradient(90deg,#fff 0 1px,#e9e9e9 1px 2px)"></div>
<div class="" style="left:408px;top:640px;width:581px;height:1px;background:repeating-linear-gradient(90deg,#fff 0 1px,#e9e9e9 1px 2px)"></div>
<div class="" style="left:408px;top:658px;width:581px;height:1px;background:repeating-linear-gradient(90deg,#fff 0 1px,#e9e9e9 1px 2px)"></div>
<div class="" style="left:408px;top:676px;width:581px;height:1px;background:repeating-linear-gradient(90deg,#fff 0 1px,#e9e9e9 1px 2px)"></div>
<div class="" style="left:408px;top:694px;width:581px;height:1px;background:repeating-linear-gradient(90deg,#fff 0 1px,#e9e9e9 1px 2px)"></div>
<div class="" style="left:408px;top:712px;width:581px;height:1px;background:repeating-linear-gradient(90deg,#fff 0 1px,#e9e9e9 1px 2px)"></div>
<div class="" style="left:408px;top:730px;width:581px;height:1px;background:repeating-linear-gradient(90deg,#fff 0 1px,#e9e9e9 1px 2px)"></div>
<div class="" style="left:408px;top:748px;width:581px;height:1px;background:repeating-linear-gradient(90deg,#fff 0 1px,#e9e9e9 1px 2px)"></div>
<div class="" style="left:408px;top:766px;width:581px;height:1px;background:repeating-linear-gradient(90deg,#fff 0 1px,#e9e9e9 1px 2px)"></div>
<div class="" style="left:408px;top:784px;width:581px;height:1px;background:repeating-linear-gradient(90deg,#fff 0 1px,#e9e9e9 1px 2px)"></div>
<div class="" style="left:408px;top:802px;width:581px;height:1px;background:repeating-linear-gradient(90deg,#fff 0 1px,#e9e9e9 1px 2px)"></div>
<div class="" style="left:408px;top:820px;width:581px;height:1px;background:repeating-linear-gradient(90deg,#fff 0 1px,#e9e9e9 1px 2px)"></div>
<div class="" style="left:408px;top:838px;width:581px;height:1px;background:repeating-linear-gradient(90deg,#fff 0 1px,#e9e9e9 1px 2px)"></div>
<div class="" style="left:408px;top:856px;width:581px;height:1px;background:repeating-linear-gradient(90deg,#fff 0 1px,#e9e9e9 1px 2px)"></div>
<div class="" style="left:408px;top:874px;width:581px;height:1px;background:repeating-linear-gradient(90deg,#fff 0 1px,#e9e9e9 1px 2px)"></div>
<div class="" style="left:408px;top:892px;width:581px;height:1px;background:repeating-linear-gradient(90deg,#fff 0 1px,#e9e9e9 1px 2px)"></div>
<span class="t " style="right:600.68px;top:517.02px;letter-spacing:-0.38px;">0</span>
<span class="t " style="left:461.9px;top:517.02px;letter-spacing:-0.32px;">0x0000</span>
<span class="t " style="left:517.4px;top:517.02px;">PAT</span>
<span class="t " style="right:387.18px;top:517.02px;letter-spacing:-0.38px;">11</span>
<span class="t " style="right:336.98px;top:517.02px;letter-spacing:-0.38px;">0</span>
<span class="t " style="left:726.7px;top:517.02px;letter-spacing:-0.13px;">3.09 kbps</span>
<span class="t " style="left:760.3px;width:200px;text-align:center;top:517.02px;letter-spacing:-0.23px;">0.02%</span>
<span class="t " style="right:600.68px;top:535.02px;letter-spacing:-0.38px;">1</span>
<span class="t " style="left:461.9px;top:535.02px;letter-spacing:-0.32px;">0x0001</span>
<span class="t " style="left:517.4px;top:535.02px;">CAT</span>
<span class="t " style="right:387.18px;top:535.02px;letter-spacing:-0.38px;">11</span>
<span class="t " style="right:336.98px;top:535.02px;letter-spacing:-0.38px;">0</span>
<span class="t " style="left:726.7px;top:535.02px;letter-spacing:-0.13px;">3.09 kbps</span>
<span class="t " style="left:760.3px;width:200px;text-align:center;top:535.02px;letter-spacing:-0.23px;">0.02%</span>
<span class="t " style="right:600.68px;top:553.02px;letter-spacing:-0.38px;">17</span>
<span class="t " style="left:461.9px;top:553.02px;letter-spacing:-0.32px;">0x0011</span>
<span class="t " style="left:517.4px;top:553.02px;">SDT</span>
<span class="t " style="right:387.18px;top:553.02px;letter-spacing:-0.38px;">3</span>
<span class="t " style="right:336.98px;top:553.02px;letter-spacing:-0.38px;">0</span>
<span class="t " style="left:726.7px;top:553.02px;letter-spacing:-0.13px;">0.84 kbps</span>
<span class="t " style="left:760.3px;width:200px;text-align:center;top:553.02px;letter-spacing:-0.23px;">0.01%</span>
<span class="t " style="right:600.68px;top:571.02px;letter-spacing:-0.38px;">18</span>
<span class="t " style="left:461.9px;top:571.02px;letter-spacing:-0.32px;">0x0012</span>
<span class="t " style="left:517.4px;top:571.02px;">EIT</span>
<span class="t " style="right:387.18px;top:571.02px;letter-spacing:-0.38px;">654</span>
<span class="t " style="right:336.98px;top:571.02px;letter-spacing:-0.38px;">0</span>
<span class="t " style="left:726.7px;top:571.02px;letter-spacing:-0.17px;">183.82 kbps</span>
<span class="t " style="left:760.3px;width:200px;text-align:center;top:571.02px;letter-spacing:-0.23px;">1.23%</span>
<span class="t " style="right:600.68px;top:589.02px;letter-spacing:-0.38px;">21</span>
<span class="t " style="left:461.9px;top:589.02px;letter-spacing:-0.32px;">0x0015</span>
<span class="t " style="left:517.4px;top:589.02px;letter-spacing:0.13px;">Network Sync</span>
<span class="t " style="right:387.18px;top:589.02px;letter-spacing:-0.38px;">9</span>
<span class="t " style="right:336.98px;top:589.02px;letter-spacing:-0.38px;">0</span>
<span class="t " style="left:726.7px;top:589.02px;letter-spacing:-0.13px;">2.53 kbps</span>
<span class="t " style="left:760.3px;width:200px;text-align:center;top:589.02px;letter-spacing:-0.23px;">0.02%</span>
<span class="t " style="right:600.68px;top:607.02px;letter-spacing:-0.38px;">601</span>
<span class="t " style="left:461.9px;top:607.02px;letter-spacing:-0.32px;">0x0259</span>
<span class="t " style="left:517.4px;top:607.02px;">PMT</span>
<span class="t " style="right:387.18px;top:607.02px;letter-spacing:-0.38px;">11</span>
<span class="t " style="right:336.98px;top:607.02px;letter-spacing:-0.38px;">0</span>
<span class="t " style="left:726.7px;top:607.02px;letter-spacing:-0.13px;">3.09 kbps</span>
<span class="t " style="left:760.3px;width:200px;text-align:center;top:607.02px;letter-spacing:-0.23px;">0.02%</span>
<span class="t " style="left:917.4px;top:607.02px;letter-spacing:-0.99px;">ORF1</span>
<span class="t " style="right:600.68px;top:625.02px;letter-spacing:-0.38px;">602</span>
<span class="t " style="left:461.9px;top:625.02px;letter-spacing:-0.25px;">0x025A</span>
<span class="t " style="left:517.4px;top:625.02px;">PMT</span>
<span class="t " style="right:387.18px;top:625.02px;letter-spacing:-0.38px;">11</span>
<span class="t " style="right:336.98px;top:625.02px;letter-spacing:-0.38px;">0</span>
<span class="t " style="left:726.7px;top:625.02px;letter-spacing:-0.13px;">3.09 kbps</span>
<span class="t " style="left:760.3px;width:200px;text-align:center;top:625.02px;letter-spacing:-0.23px;">0.02%</span>
<span class="t " style="left:917.4px;top:625.02px;letter-spacing:-0.64px;">ORF2 K</span>
<span class="t " style="right:600.68px;top:643.02px;letter-spacing:-0.38px;">603</span>
<span class="t " style="left:461.9px;top:643.02px;letter-spacing:-0.25px;">0x025B</span>
<span class="t " style="left:517.4px;top:643.02px;">PMT</span>
<span class="t " style="right:387.18px;top:643.02px;letter-spacing:-0.38px;">11</span>
<span class="t " style="right:336.98px;top:643.02px;letter-spacing:-0.38px;">0</span>
<span class="t " style="left:726.7px;top:643.02px;letter-spacing:-0.13px;">3.09 kbps</span>
<span class="t " style="left:760.3px;width:200px;text-align:center;top:643.02px;letter-spacing:-0.23px;">0.02%</span>
<span class="t " style="left:917.4px;top:643.02px;letter-spacing:-0.58px;">ORF2 T</span>
<span class="t " style="right:600.68px;top:661.02px;letter-spacing:-0.38px;">607</span>
<span class="t " style="left:461.9px;top:661.02px;letter-spacing:-0.25px;">0x025F</span>
<span class="t " style="left:517.4px;top:661.02px;">PMT</span>
<span class="t " style="right:387.18px;top:661.02px;letter-spacing:-0.38px;">12</span>
<span class="t " style="right:336.98px;top:661.02px;letter-spacing:-0.38px;">0</span>
<span class="t " style="left:726.7px;top:661.02px;letter-spacing:-0.13px;">3.37 kbps</span>
<span class="t " style="left:760.3px;width:200px;text-align:center;top:661.02px;letter-spacing:-0.23px;">0.02%</span>
<span class="t " style="left:917.4px;top:661.02px;letter-spacing:-0.37px;">ORF2T HD</span>
<span class="t " style="right:600.68px;top:679.02px;letter-spacing:-0.38px;">6010</span>
<span class="t " style="left:461.9px;top:679.02px;letter-spacing:-0.25px;">0x177A</span>
<span class="t " style="left:517.4px;top:679.02px;letter-spacing:-0.22px;">MPEG2 Video</span>
<span class="t " style="right:387.18px;top:679.02px;letter-spacing:-0.38px;">11276</span>
<span class="t " style="right:336.98px;top:679.02px;letter-spacing:-0.38px;">0</span>
<span class="t " style="left:726.7px;top:679.02px;letter-spacing:-0.13px;">3.17 Mbps</span>
<span class="t " style="left:760.3px;width:200px;text-align:center;top:679.02px;letter-spacing:-0.25px;">21.18%</span>
<span class="t " style="left:917.4px;top:679.02px;letter-spacing:-0.99px;">ORF1</span>
<span class="t " style="right:600.68px;top:697.02px;letter-spacing:-0.38px;">6011</span>
<span class="t " style="left:461.9px;top:697.02px;letter-spacing:-0.25px;">0x177B</span>
<span class="t " style="left:517.4px;top:697.02px;">MPEG Audio</span>
<span class="t " style="right:387.18px;top:697.02px;letter-spacing:-0.38px;">615</span>
<span class="t " style="right:336.98px;top:697.02px;letter-spacing:-0.38px;">0</span>
<span class="t " style="left:726.7px;top:697.02px;letter-spacing:-0.17px;">172.86 kbps</span>
<span class="t " style="left:760.3px;width:200px;text-align:center;top:697.02px;letter-spacing:-0.23px;">1.15%</span>
<span class="t " style="left:917.4px;top:697.02px;letter-spacing:-0.99px;">ORF1</span>
<span class="t " style="right:600.68px;top:715.02px;letter-spacing:-0.38px;">6012</span>
<span class="t " style="left:461.9px;top:715.02px;letter-spacing:-0.25px;">0x177C</span>
<span class="t " style="left:517.4px;top:715.02px;">MPEG Audio</span>
<span class="t " style="right:387.18px;top:715.02px;letter-spacing:-0.38px;">615</span>
<span class="t " style="right:336.98px;top:715.02px;letter-spacing:-0.38px;">0</span>
<span class="t " style="left:726.7px;top:715.02px;letter-spacing:-0.17px;">172.86 kbps</span>
<span class="t " style="left:760.3px;width:200px;text-align:center;top:715.02px;letter-spacing:-0.23px;">1.15%</span>
<span class="t " style="left:917.4px;top:715.02px;letter-spacing:-0.99px;">ORF1</span>
<span class="t " style="right:600.68px;top:733.02px;letter-spacing:-0.38px;">6013</span>
<span class="t " style="left:461.9px;top:733.02px;letter-spacing:-0.25px;">0x177D</span>
<span class="t " style="left:517.4px;top:733.02px;letter-spacing:-0.04px;">AC3 Audio</span>
<span class="t " style="right:387.18px;top:733.02px;letter-spacing:-0.38px;">1677</span>
<span class="t " style="right:336.98px;top:733.02px;letter-spacing:-0.38px;">0</span>
<span class="t " style="left:726.7px;top:733.02px;letter-spacing:-0.17px;">471.35 kbps</span>
<span class="t " style="left:760.3px;width:200px;text-align:center;top:733.02px;letter-spacing:-0.23px;">3.15%</span>
<span class="t " style="left:917.4px;top:733.02px;letter-spacing:-0.99px;">ORF1</span>
<span class="t " style="right:600.68px;top:751.02px;letter-spacing:-0.38px;">6014</span>
<span class="t " style="left:461.9px;top:751.02px;letter-spacing:-0.25px;">0x177E</span>
<span class="t " style="left:517.4px;top:751.02px;">Teletext</span>
<span class="t " style="right:387.18px;top:751.02px;letter-spacing:-0.38px;">134</span>
<span class="t " style="right:336.98px;top:751.02px;letter-spacing:-0.38px;">0</span>
<span class="t " style="left:726.7px;top:751.02px;letter-spacing:-0.15px;">37.66 kbps</span>
<span class="t " style="left:760.3px;width:200px;text-align:center;top:751.02px;letter-spacing:-0.23px;">0.25%</span>
<span class="t " style="left:917.4px;top:751.02px;letter-spacing:-0.99px;">ORF1</span>
<span class="t " style="right:600.68px;top:769.02px;letter-spacing:-0.38px;">6015</span>
<span class="t " style="left:461.9px;top:769.02px;letter-spacing:-0.25px;">0x177F</span>
<span class="t " style="left:517.4px;top:769.02px;">Teletext</span>
<span class="t " style="right:387.18px;top:769.02px;letter-spacing:-0.38px;">939</span>
<span class="t " style="right:336.98px;top:769.02px;letter-spacing:-0.38px;">0</span>
<span class="t " style="left:726.7px;top:769.02px;letter-spacing:-0.17px;">263.92 kbps</span>
<span class="t " style="left:760.3px;width:200px;text-align:center;top:769.02px;letter-spacing:-0.23px;">1.76%</span>
<span class="t " style="left:917.4px;top:769.02px;letter-spacing:-0.99px;">ORF1</span>
<span class="t " style="right:600.68px;top:787.02px;letter-spacing:-0.38px;">6020</span>
<span class="t " style="left:461.9px;top:787.02px;letter-spacing:-0.32px;">0x1784</span>
<span class="t " style="left:517.4px;top:787.02px;letter-spacing:-0.22px;">MPEG2 Video</span>
<span class="t " style="right:387.18px;top:787.02px;letter-spacing:-0.38px;">11657</span>
<span class="t " style="right:336.98px;top:787.02px;letter-spacing:-0.38px;">0</span>
<span class="t " style="left:726.7px;top:787.02px;letter-spacing:-0.13px;">3.28 Mbps</span>
<span class="t " style="left:760.3px;width:200px;text-align:center;top:787.02px;letter-spacing:-0.25px;">21.89%</span>
<span class="t " style="left:917.4px;top:787.02px;letter-spacing:-0.64px;">ORF2 K</span>
<span class="t " style="right:600.68px;top:805.02px;letter-spacing:-0.38px;">6021</span>
<span class="t " style="left:461.9px;top:805.02px;letter-spacing:-0.32px;">0x1785</span>
<span class="t " style="left:517.4px;top:805.02px;">MPEG Audio</span>
<span class="t " style="right:387.18px;top:805.02px;letter-spacing:-0.38px;">615</span>
<span class="t " style="right:336.98px;top:805.02px;letter-spacing:-0.38px;">0</span>
<span class="t " style="left:726.7px;top:805.02px;letter-spacing:-0.17px;">172.86 kbps</span>
<span class="t " style="left:760.3px;width:200px;text-align:center;top:805.02px;letter-spacing:-0.23px;">1.15%</span>
<span class="t " style="left:917.4px;top:805.02px;letter-spacing:-0.64px;">ORF2 K</span>
<span class="t " style="right:600.68px;top:823.02px;letter-spacing:-0.38px;">6023</span>
<span class="t " style="left:461.9px;top:823.02px;letter-spacing:-0.32px;">0x1787</span>
<span class="t " style="left:517.4px;top:823.02px;letter-spacing:-0.04px;">AC3 Audio</span>
<span class="t " style="right:387.18px;top:823.02px;letter-spacing:-0.38px;">1676</span>
<span class="t " style="right:336.98px;top:823.02px;letter-spacing:-0.38px;">0</span>
<span class="t " style="left:726.7px;top:823.02px;letter-spacing:-0.17px;">471.07 kbps</span>
<span class="t " style="left:760.3px;width:200px;text-align:center;top:823.02px;letter-spacing:-0.23px;">3.15%</span>
<span class="t " style="left:917.4px;top:823.02px;letter-spacing:-0.64px;">ORF2 K</span>
<span class="t " style="right:600.68px;top:841.02px;letter-spacing:-0.38px;">6024</span>
<span class="t " style="left:461.9px;top:841.02px;letter-spacing:-0.32px;">0x1788</span>
<span class="t " style="left:517.4px;top:841.02px;">Teletext</span>
<span class="t " style="right:387.18px;top:841.02px;letter-spacing:-0.38px;">134</span>
<span class="t " style="right:336.98px;top:841.02px;letter-spacing:-0.38px;">0</span>
<span class="t " style="left:726.7px;top:841.02px;letter-spacing:-0.15px;">37.66 kbps</span>
<span class="t " style="left:760.3px;width:200px;text-align:center;top:841.02px;letter-spacing:-0.23px;">0.25%</span>
<span class="t " style="left:917.4px;top:841.02px;letter-spacing:-0.64px;">ORF2 K</span>
<span class="t " style="right:600.68px;top:859.02px;letter-spacing:-0.38px;">6025</span>
<span class="t " style="left:461.9px;top:859.02px;letter-spacing:-0.32px;">0x1789</span>
<span class="t " style="left:517.4px;top:859.02px;">Teletext</span>
<span class="t " style="right:387.18px;top:859.02px;letter-spacing:-0.38px;">939</span>
<span class="t " style="right:336.98px;top:859.02px;letter-spacing:-0.38px;">0</span>
<span class="t " style="left:726.7px;top:859.02px;letter-spacing:-0.17px;">263.92 kbps</span>
<span class="t " style="left:760.3px;width:200px;text-align:center;top:859.02px;letter-spacing:-0.23px;">1.76%</span>
<span class="t " style="left:917.4px;top:859.02px;letter-spacing:-0.64px;">ORF2 K</span>
<span class="t " style="right:600.68px;top:877.02px;letter-spacing:-0.38px;">6150</span>
<span class="t " style="left:461.9px;top:877.02px;letter-spacing:-0.32px;">0x1806</span>
<span class="t " style="left:517.4px;top:877.02px;letter-spacing:-0.10px;">H.264 Video</span>
<span class="t " style="right:387.18px;top:877.02px;letter-spacing:-0.38px;">3705</span>
<span class="t " style="right:336.98px;top:877.02px;letter-spacing:-0.38px;">0</span>
<span class="t " style="left:726.7px;top:877.02px;letter-spacing:-0.13px;">1.04 Mbps</span>
<span class="t " style="left:760.3px;width:200px;text-align:center;top:877.02px;letter-spacing:-0.23px;">6.96%</span>
<span class="t " style="left:917.4px;top:877.02px;letter-spacing:-0.37px;">ORF2T HD</span>
<div class="hdr" style="left:409px;top:497px;width:611px;height:17px;border-bottom-color:#dadada"></div>
<div class="hsep" style="left:508px;top:497px;width:1px;height:16px;"></div>
<div class="hsep" style="left:598px;top:497px;width:1px;height:16px;"></div>
<div class="hsep" style="left:668px;top:497px;width:1px;height:16px;"></div>
<div class="hsep" style="left:718px;top:497px;width:1px;height:16px;"></div>
<div class="hsep" style="left:808px;top:497px;width:1px;height:16px;"></div>
<div class="hsep" style="left:908px;top:497px;width:1px;height:16px;"></div>
<div class="hsep" style="left:988px;top:497px;width:1px;height:16px;"></div>
<span class="t " style="left:448.7px;top:499.52px;">PID</span>
<span class="t " style="left:515px;top:499.52px;letter-spacing:0.03px;">Stream Type</span>
<span class="t " style="right:387.03px;top:499.52px;letter-spacing:-0.23px;">Packets</span>
<span class="t " style="right:336.70px;top:499.52px;letter-spacing:-0.10px;">Missi...</span>
<span class="t " style="left:725.3px;top:499.52px;letter-spacing:-0.34px;">Data Rate</span>
<span class="t " style="right:173.25px;top:499.52px;letter-spacing:-0.05px;">Percent</span>
<span class="t " style="left:915px;top:499.52px;letter-spacing:-0.24px;">Service</span>
<svg style="position:absolute;left:475px;top:505px" width="9" height="5"><path d="M0 5L4.5 0L9 5Z" fill="#a9a9a9"/></svg>
<div class="" style="left:1004px;top:515px;width:16px;height:381px;background:linear-gradient(90deg,#ececec,#f1f1f1 30%,#f0f0f0)"></div>
<svg style="position:absolute;left:1009px;top:522px" width="7" height="4"><path d="M0 4L3.5 0L7 4Z" fill="#333"/></svg>
<svg style="position:absolute;left:1009px;top:884px" width="7" height="4"><path d="M0 0L3.5 4L7 0Z" fill="#333"/></svg>
<div class="" style="left:1004px;top:533px;width:15px;height:301px;border:1px solid #959595;border-radius:2px;background:linear-gradient(90deg,#f4f4f4,#e6e6e6 48%,#d2d2d2 52%,#d8d8d8);box-shadow:inset 0 0 0 1px rgba(255,255,255,.7)"></div>
<div class="" style="left:1008px;top:679px;width:7px;height:1px;background:#6b6b6b"></div>
<div class="" style="left:1008px;top:681px;width:7px;height:1px;background:#6b6b6b"></div>
<div class="" style="left:1008px;top:683px;width:7px;height:1px;background:#6b6b6b"></div>
<div class="" style="left:1008px;top:685px;width:7px;height:1px;background:#6b6b6b"></div>
<div class="pnl" style="left:406px;top:898px;width:617px;height:80px;border-color:#d9e3ea"></div>
<div class="btn" style="left:419px;top:912px;width:99px;height:21px;line-height:19px"><span style="letter-spacing:-0.23px;">Restart</span></div>
<div class="btn d" style="left:531px;top:912px;width:99px;height:21px;line-height:19px"><span style="">Preview</span></div>
<div class="btn" style="left:419px;top:946px;width:99px;height:21px;line-height:19px"><span style="letter-spacing:-0.61px;">Save as CSV</span></div>
<div class="btn d" style="left:531px;top:946px;width:99px;height:21px;line-height:19px"><span style="">Start Recording</span></div>
<span class="t " style="left:875.4px;top:909.62px;letter-spacing:-0.31px;">Data Rate:</span>
<span class="t " style="left:944.7px;top:909.62px;">14.97 Mbps</span>
<span class="t " style="left:876.6px;top:925.62px;letter-spacing:0.11px;">Quality:</span>
<span class="t " style="left:943.5px;top:925.62px;letter-spacing:-0.26px;">100 %</span>
<span class="t " style="left:875.4px;top:941.62px;letter-spacing:-0.07px;">Rec. Time:</span>
<span class="t " style="left:944.7px;top:941.62px;letter-spacing:-0.40px;">00:00:00</span>
<span class="t " style="left:875.4px;top:957.62px;letter-spacing:0.20px;">Written:</span>
<span class="t " style="left:944.7px;top:957.62px;letter-spacing:0.04px;">0 MB</span>
</body></html>
